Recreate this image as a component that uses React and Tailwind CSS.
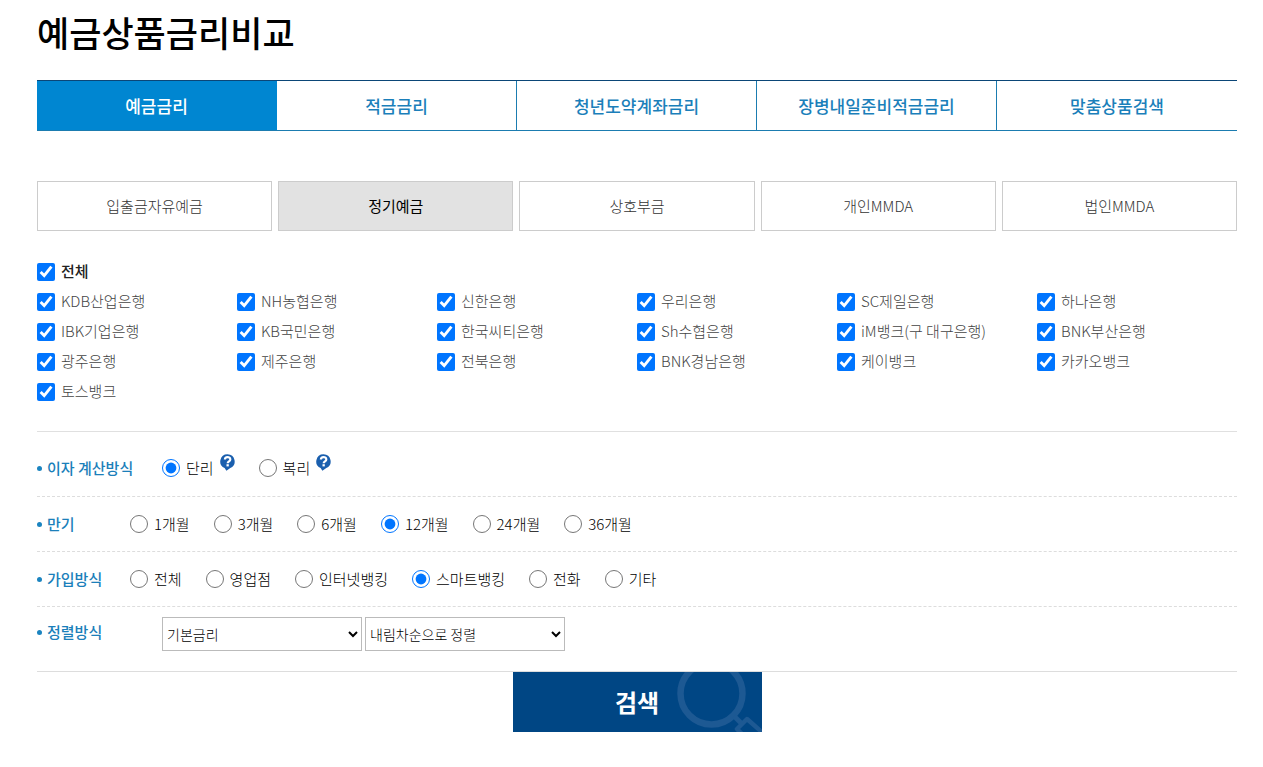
import React, { useState } from 'react'

const TABS = ['예금금리', '적금금리', '청년도약계좌금리', '장병내일준비적금금리', '맞춤상품검색']

const PRODUCTS = ['입출금자유예금', '정기예금', '상호부금', '개인MMDA', '법인MMDA']

const BANKS = [
  'KDB산업은행', 'NH농협은행', '신한은행', '우리은행', 'SC제일은행', '하나은행',
  'IBK기업은행', 'KB국민은행', '한국씨티은행', 'Sh수협은행', 'iM뱅크(구 대구은행)', 'BNK부산은행',
  '광주은행', '제주은행', '전북은행', 'BNK경남은행', '케이뱅크', '카카오뱅크',
  '토스뱅크',
]

const INTEREST = ['단리', '복리']
const TERMS = ['1개월', '3개월', '6개월', '12개월', '24개월', '36개월']
const CHANNELS = ['전체', '영업점', '인터넷뱅킹', '스마트뱅킹', '전화', '기타']

function HelpIcon() {
  return (
    <svg width="15" height="17" viewBox="0 0 15 17" aria-hidden="true">
      <path d="M7.5 0.3a7.2 7.2 0 0 1 2.8 13.8L6.4 16.8 4.6 14.1A7.2 7.2 0 0 1 7.5 0.3z" fill="#1a5fae" />
      <path d="M4.9 5.6c0-3.2 5.4-3.2 5.4-0.2 0 1.9-2.6 1.9-2.6 3.8" fill="none" stroke="#fff" strokeWidth="2.2" />
      <rect x="6.5" y="10.2" width="2.3" height="2.2" fill="#fff" />
    </svg>
  )
}

function Check({ label, checked, onChange, className }) {
  return (
    <label className={`flex h-[30px] items-center gap-1.5 whitespace-nowrap ${className}`}>
      <input type="checkbox" checked={checked} onChange={onChange} className="size-[18px] shrink-0" />
      <span className="pb-0.5">{label}</span>
    </label>
  )
}

function RadioGroup({ name, options, value, onChange, help }) {
  return (
    <div className="flex flex-wrap items-center gap-x-6 font-light text-black">
      {options.map((option) => (
        <div key={option} className="flex items-center gap-1.5">
          <label className="flex items-center gap-1.5">
            <input
              type="radio"
              name={name}
              checked={value === option}
              onChange={() => onChange(option)}
              className="size-[18px] shrink-0"
            />
            {option}
          </label>
          {help && (
            <button type="button" aria-label={`${option} 도움말`} className="mb-3">
              <HelpIcon />
            </button>
          )}
        </div>
      ))}
    </div>
  )
}

function RowLabel({ children, className }) {
  return (
    <div className={`flex shrink-0 items-center gap-[5px] font-medium text-[#1b7fba] ${className}`}>
      <span className="size-[5px] rounded-full bg-[#1b84c0]" />
      {children}
    </div>
  )
}

function App() {
  const [tab, setTab] = useState('예금금리')
  const [product, setProduct] = useState('정기예금')
  const [selected, setSelected] = useState(BANKS)
  const [interest, setInterest] = useState('단리')
  const [term, setTerm] = useState('12개월')
  const [channel, setChannel] = useState('스마트뱅킹')

  const allSelected = selected.length === BANKS.length

  const toggleBank = (bank) => {
    setSelected(selected.includes(bank) ? selected.filter((b) => b !== bank) : [...selected, bank])
  }

  return (
    <main className="bg-white pr-[26px] pb-9 pl-[37px] font-['Noto_Sans_CJK_KR',sans-serif] text-[15px] leading-5 text-[#222]">
      <h1 className="pt-2 pb-6 text-[35px] leading-[48px] font-medium text-black">예금상품금리비교</h1>

      <nav className="grid grid-cols-5 border-y border-t-[#0b4677] border-b-[#1b7cb0]">
        {TABS.map((name) => (
          <button
            key={name}
            type="button"
            onClick={() => setTab(name)}
            className={`h-[49px] border-r text-[17px] font-medium last:border-r-0 ${tab === name
              ? 'border-[#0086d1] bg-[#0086d1] text-white'
              : 'border-[#1b7cb0] text-[#1b7fba]'
              }`}
          >
            {name}
          </button>
        ))}
      </nav>

      <div className="mt-[50px] grid grid-cols-5 gap-1.5">
        {PRODUCTS.map((name) => (
          <button
            key={name}
            type="button"
            onClick={() => setProduct(name)}
            className={`h-[50px] border border-[#ccc] ${product === name
              ? 'bg-[#e2e2e2] text-black'
              : 'font-light text-[#333]'
              }`}
          >
            {name}
          </button>
        ))}
      </div>

      <form onSubmit={(e) => e.preventDefault()}>
        <div className="border-b border-[#e0e0e0] pt-[26px] pb-6">
          <Check
            label="전체"
            checked={allSelected}
            onChange={() => setSelected(allSelected ? [] : BANKS)}
            className="font-medium"
          />
          <div className="grid grid-cols-6">
            {BANKS.map((bank) => (
              <Check
                key={bank}
                label={bank}
                checked={selected.includes(bank)}
                onChange={() => toggleBank(bank)}
                className="font-light text-[#444]"
              />
            ))}
          </div>
        </div>

        <div className="flex h-[65px] items-center border-b border-dashed border-[#ddd] pt-2">
          <RowLabel className="w-[125px]">이자 계산방식</RowLabel>
          <RadioGroup name="interest" options={INTEREST} value={interest} onChange={setInterest} help />
        </div>
        <div className="flex h-[55px] items-center border-b border-dashed border-[#ddd]">
          <RowLabel className="w-[93px]">만기</RowLabel>
          <RadioGroup name="term" options={TERMS} value={term} onChange={setTerm} />
        </div>
        <div className="flex h-[55px] items-center border-b border-dashed border-[#ddd]">
          <RowLabel className="w-[93px]">가입방식</RowLabel>
          <RadioGroup name="channel" options={CHANNELS} value={channel} onChange={setChannel} />
        </div>
        <div className="flex items-center border-b border-[#ddd] pt-2.5 pb-5">
          <RowLabel className="w-[125px] pb-1">정렬방식</RowLabel>
          <div className="flex gap-[3px] text-sm font-light text-black">
            <select aria-label="정렬 기준" className="h-[34px] w-[200px] border border-[#bbb] bg-white">
              <option>기본금리</option>
              <option>최고금리</option>
            </select>
            <select aria-label="정렬 순서" className="h-[34px] w-[200px] border border-[#bbb] bg-white">
              <option>내림차순으로 정렬</option>
              <option>오름차순으로 정렬</option>
            </select>
          </div>
        </div>

        <button
          type="submit"
          className="relative mx-auto block h-[60px] w-[249px] overflow-hidden bg-[#004684] text-2xl font-bold text-white"
        >
          <svg className="absolute top-0 right-0" width="89" height="60" viewBox="0 0 89 60" fill="none" stroke="#1d5993" aria-hidden="true">
            <circle cx="38.5" cy="21.5" r="31" strokeWidth="6.5" />
            <path d="M61 44l7 7" strokeWidth="5" />
            <path d="M90 61L74 47 64 57l7 7" strokeWidth="4.5" strokeLinejoin="round" />
          </svg>
          <span className="relative">검색</span>
        </button>
      </form>
    </main>
  )
}

export default App
